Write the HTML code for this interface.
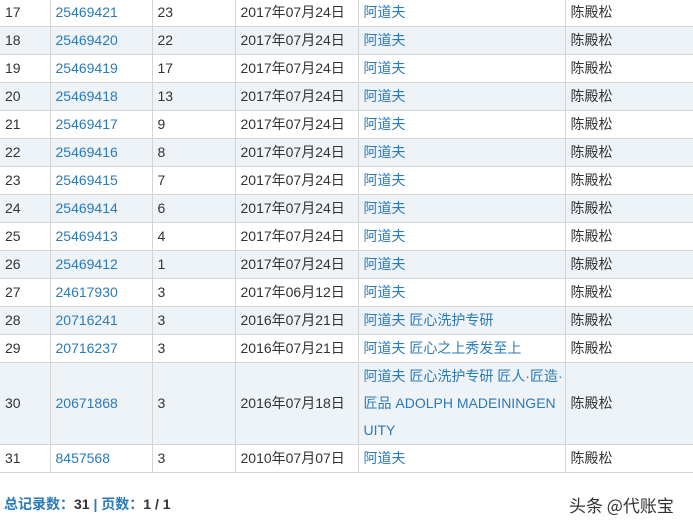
<!DOCTYPE html>
<html><head><meta charset="utf-8"><style>
body{margin:0;width:693px;height:530px;overflow:hidden;background:#fff;font-family:"Liberation Sans","Noto Sans CJK SC",sans-serif;font-size:14px;color:#333;position:relative}
table{position:absolute;left:0;top:-2px;border-collapse:collapse;width:700px;table-layout:fixed}
td{border:1px solid #d4d4d4;height:27px;padding:0 0 0 5px;line-height:27px;vertical-align:middle;white-space:nowrap}
td:first-child{border-left:none}
td:last-child{border-right:none}
tr:nth-child(even) td{background:#eef3f8}
.b{color:#2b7ab9}
.multi{line-height:27px;overflow:hidden}
.foot{position:absolute;left:4px;top:494px;font-size:14px;font-weight:bold;color:#2b7ab9}
.foot b{color:#333}
.wm{position:absolute;left:569px;top:492px;font-size:17px;color:#333;font-family:"Noto Sans CJK SC",sans-serif}
</style></head><body>
<table>
<colgroup><col style="width:50px"><col style="width:102px"><col style="width:83px"><col style="width:123px"><col style="width:207px"><col></colgroup>
<tr><td>17</td><td class="b">25469421</td><td>23</td><td>2017年07月24日</td><td class="b">阿道夫</td><td>陈殿松</td></tr>
<tr><td>18</td><td class="b">25469420</td><td>22</td><td>2017年07月24日</td><td class="b">阿道夫</td><td>陈殿松</td></tr>
<tr><td>19</td><td class="b">25469419</td><td>17</td><td>2017年07月24日</td><td class="b">阿道夫</td><td>陈殿松</td></tr>
<tr><td>20</td><td class="b">25469418</td><td>13</td><td>2017年07月24日</td><td class="b">阿道夫</td><td>陈殿松</td></tr>
<tr><td>21</td><td class="b">25469417</td><td>9</td><td>2017年07月24日</td><td class="b">阿道夫</td><td>陈殿松</td></tr>
<tr><td>22</td><td class="b">25469416</td><td>8</td><td>2017年07月24日</td><td class="b">阿道夫</td><td>陈殿松</td></tr>
<tr><td>23</td><td class="b">25469415</td><td>7</td><td>2017年07月24日</td><td class="b">阿道夫</td><td>陈殿松</td></tr>
<tr><td>24</td><td class="b">25469414</td><td>6</td><td>2017年07月24日</td><td class="b">阿道夫</td><td>陈殿松</td></tr>
<tr><td>25</td><td class="b">25469413</td><td>4</td><td>2017年07月24日</td><td class="b">阿道夫</td><td>陈殿松</td></tr>
<tr><td>26</td><td class="b">25469412</td><td>1</td><td>2017年07月24日</td><td class="b">阿道夫</td><td>陈殿松</td></tr>
<tr><td>27</td><td class="b">24617930</td><td>3</td><td>2017年06月12日</td><td class="b">阿道夫</td><td>陈殿松</td></tr>
<tr><td>28</td><td class="b">20716241</td><td>3</td><td>2016年07月21日</td><td class="b">阿道夫 匠心洗护专研</td><td>陈殿松</td></tr>
<tr><td>29</td><td class="b">20716237</td><td>3</td><td>2016年07月21日</td><td class="b">阿道夫 匠心之上秀发至上</td><td>陈殿松</td></tr>
<tr><td style="height:81px">30</td><td class="b">20671868</td><td>3</td><td>2016年07月18日</td><td class="b multi">阿道夫 匠心洗护专研 匠人·匠造·<br>匠品 ADOLPH MADEININGEN<br>UITY</td><td>陈殿松</td></tr>
<tr><td>31</td><td class="b">8457568</td><td>3</td><td>2010年07月07日</td><td class="b">阿道夫</td><td>陈殿松</td></tr>
</table>
<div class="foot">总记录数：<b>31</b> | 页数：<b>1 / 1</b></div>
<div class="wm">头条 @代账宝</div>
</body></html>
